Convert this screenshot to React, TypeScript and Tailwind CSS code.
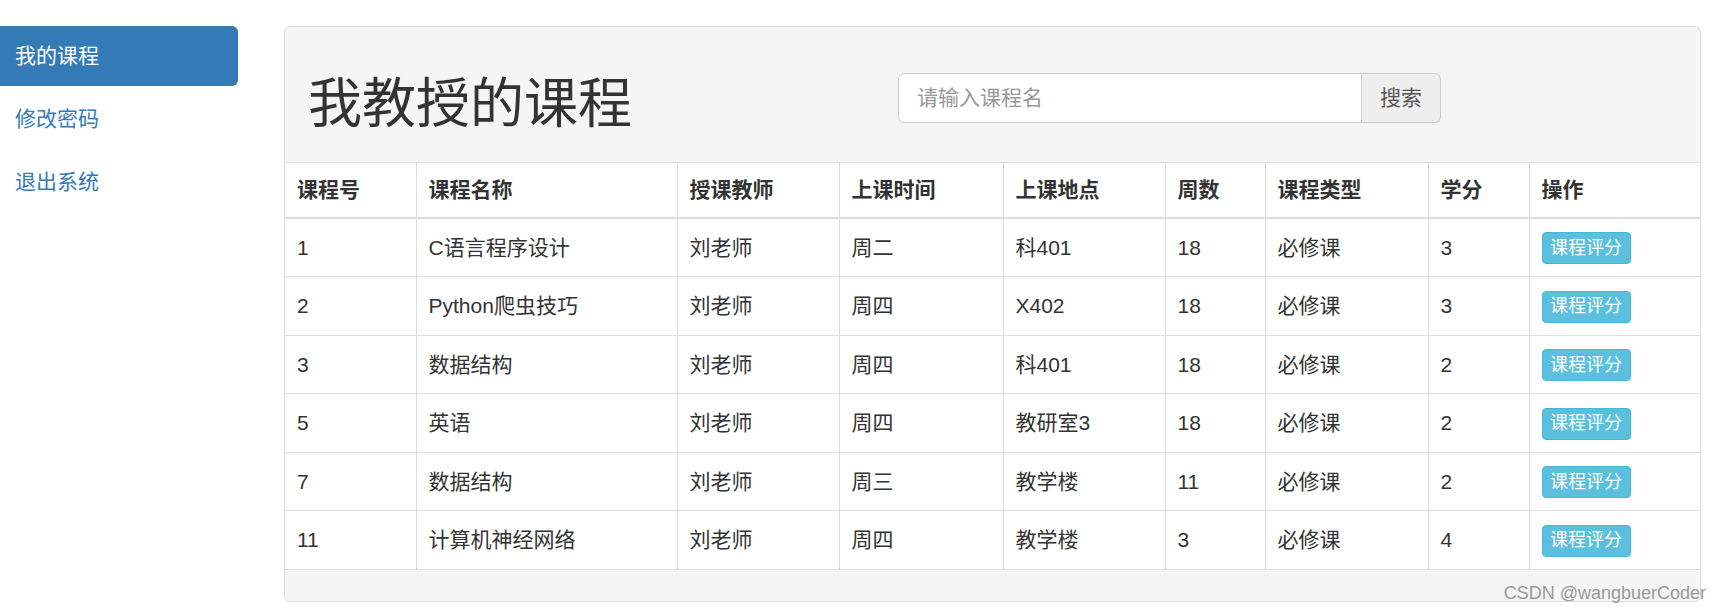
const courses = [
  { id: '1', name: 'C语言程序设计', teacher: '刘老师', time: '周二', place: '科401', weeks: '18', type: '必修课', credit: '3' },
  { id: '2', name: 'Python爬虫技巧', teacher: '刘老师', time: '周四', place: 'X402', weeks: '18', type: '必修课', credit: '3' },
  { id: '3', name: '数据结构', teacher: '刘老师', time: '周四', place: '科401', weeks: '18', type: '必修课', credit: '2' },
  { id: '5', name: '英语', teacher: '刘老师', time: '周四', place: '教研室3', weeks: '18', type: '必修课', credit: '2' },
  { id: '7', name: '数据结构', teacher: '刘老师', time: '周三', place: '教学楼', weeks: '11', type: '必修课', credit: '2' },
  { id: '11', name: '计算机神经网络', teacher: '刘老师', time: '周四', place: '教学楼', weeks: '3', type: '必修课', credit: '4' },
];

const columns = ['课程号', '课程名称', '授课教师', '上课时间', '上课地点', '周数', '课程类型', '学分', '操作'];
const widths = [131, 261, 162, 164, 162, 100, 163, 101, 171];

function Sidebar() {
  return (
    <ul className="w-[238px] mt-[26px] shrink-0 text-[21px]">
      <li className="h-[60px] flex items-center pl-[15px] bg-[#337ab7] text-white rounded-r-[6px]">我的课程</li>
      <li className="h-[60px] mt-[3px] flex items-center pl-[15px] text-[#337ab7]">修改密码</li>
      <li className="h-[60px] mt-[3px] flex items-center pl-[15px] text-[#337ab7]">退出系统</li>
    </ul>
  );
}

function SearchBox() {
  return (
    <div className="flex mt-[46px]">
      <div className="w-[464px] h-[50px] bg-white border border-[#ccc] rounded-l-[6px] flex items-center px-[18px] text-[21px] text-[#999]">
        请输入课程名
      </div>
      <div className="w-[79px] h-[50px] bg-[#eee] border border-l-0 border-[#ccc] rounded-r-[6px] flex items-center justify-center text-[21px] text-[#555]">
        搜索
      </div>
    </div>
  );
}

export default function App() {
  return (
    <div className="relative w-[1720px] h-[613px] bg-white flex font-['Liberation_Sans','Noto_Sans_CJK_SC',sans-serif] text-[#333]">
      <Sidebar />
      <div className="ml-[46px] mt-[26px] w-[1417px] h-[576px] border border-[#ddd] rounded-[6px] bg-[#f5f5f5] overflow-hidden flex flex-col">
        <div className="h-[136px] shrink-0 flex items-start pl-[23px] border-b border-[#ddd]">
          <h1 className="w-[590px] mt-[47px] text-[54px] leading-[60px] font-normal">我教授的课程</h1>
          <SearchBox />
        </div>
        <table className="table-fixed w-[1415px] bg-white border-collapse text-[21px]">
          <colgroup>
            {widths.map((w, i) => (
              <col key={i} style={{ width: w }} />
            ))}
          </colgroup>
          <thead>
            <tr>
              {columns.map((c, i) => (
                <th
                  key={c}
                  className={`h-[55px] px-[12px] text-left font-bold border-b-2 border-[#ddd] align-middle ${i > 0 ? 'border-l' : ''}`}
                >
                  {c}
                </th>
              ))}
            </tr>
          </thead>
          <tbody>
            {courses.map((r, idx) => (
              <tr key={r.id} className={idx > 0 ? 'border-t border-[#ddd]' : ''}>
                {[r.id, r.name, r.teacher, r.time, r.place, r.weeks, r.type, r.credit].map((v, i) => (
                  <td key={i} className={`h-[58.5px] px-[12px] align-middle ${i > 0 ? 'border-l border-[#ddd]' : ''}`}>
                    {v}
                  </td>
                ))}
                <td className="h-[58.5px] px-[12px] align-middle border-l border-[#ddd]">
                  <span className="inline-flex items-center justify-center w-[89px] h-[32px] bg-[#5bc0de] border border-[#46b8da] rounded-[4px] text-white text-[18px]">
                    课程评分
                  </span>
                </td>
              </tr>
            ))}
          </tbody>
        </table>
        <div className="flex-1 border-t border-[#ddd] bg-[#f5f5f5]" />
      </div>
      <span className="absolute right-[14px] bottom-[6px] text-[18px] text-[#999] font-['Liberation_Sans',sans-serif]">
        CSDN @wangbuerCoder
      </span>
    </div>
  );
}
